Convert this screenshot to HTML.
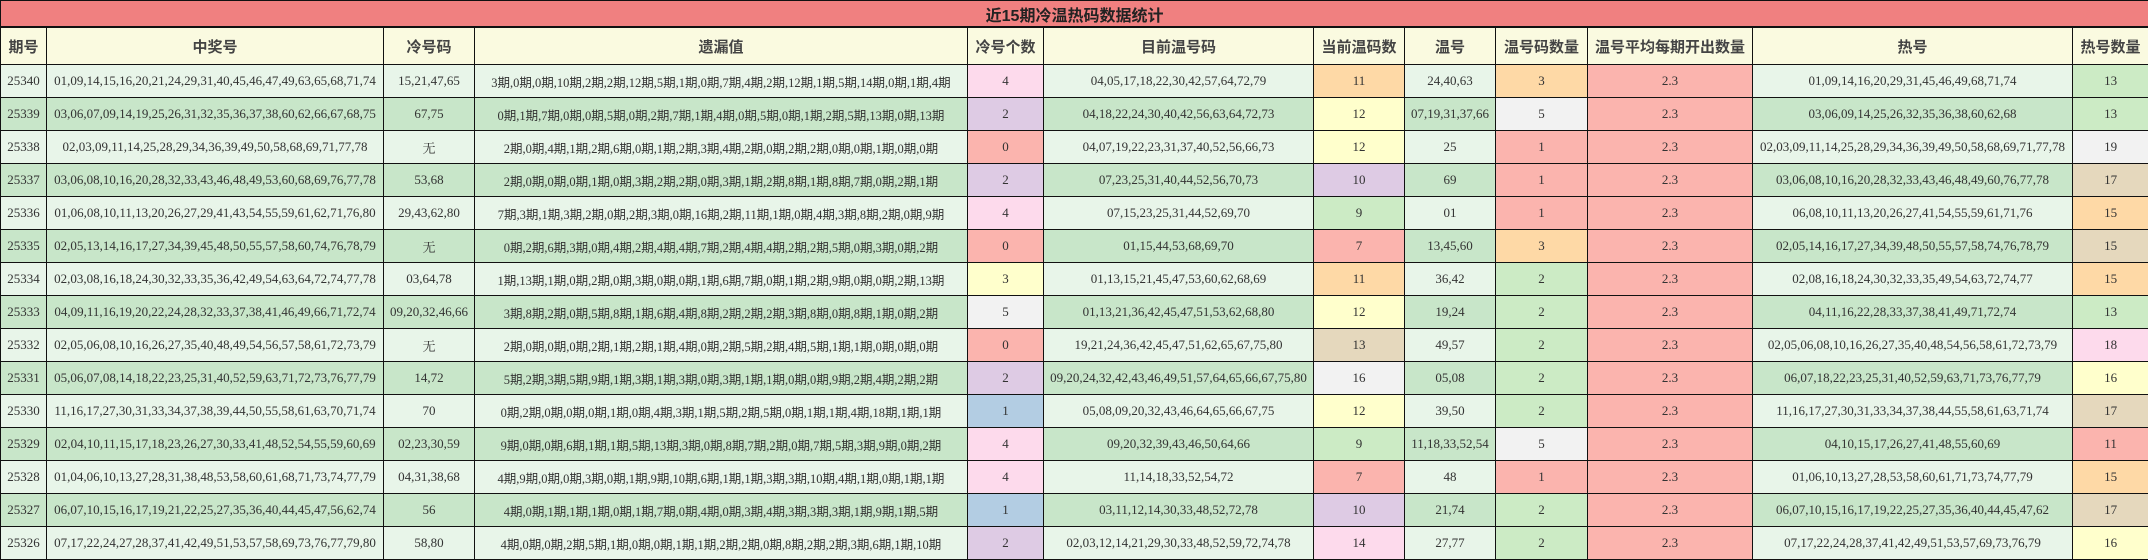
<!DOCTYPE html>
<html><head><meta charset="utf-8">
<style>
html,body{margin:0;padding:0;background:#fff;}
body{width:2148px;height:559px;overflow:hidden;}
table{border-collapse:collapse;table-layout:fixed;width:2148px;font-family:"Liberation Serif","Noto Serif CJK SC","Noto Sans CJK SC",serif;color:#333;}
td,th{border:1px solid #111;text-align:center;padding:0;white-space:nowrap;overflow:hidden;font-size:13px;}
tr.t td{height:25px;background:#f08080;font-family:"Liberation Sans","Noto Sans CJK SC",sans-serif;font-weight:bold;font-size:16px;color:#222;border-bottom:2px solid #111;}
tr.h th{height:36px;background:#fafae0;font-family:"Liberation Sans","Noto Sans CJK SC",sans-serif;font-weight:bold;font-size:15px;color:#444;}
tr.d td{height:32px;}
tr.a td{background:#e8f5e9;}
tr.b td{background:#c8e6c9;}
td.y{font-size:12.5px;font-family:"Liberation Serif","Noto Sans CJK SC",serif;}
tr.d td.R{background:#fbb4ae;}
tr.d td.B{background:#b3cde3;}
tr.d td.G{background:#ccebc5;}
tr.d td.P{background:#decbe4;}
tr.d td.O{background:#fed9a6;}
tr.d td.Y{background:#ffffcc;}
tr.d td.T{background:#e5d8bd;}
tr.d td.K{background:#fddaec;}
tr.d td.S{background:#f2f2f2;}
</style></head><body>
<table>
<colgroup><col style="width:46px"><col style="width:337px"><col style="width:91px"><col style="width:493px"><col style="width:76px"><col style="width:270px"><col style="width:91px"><col style="width:91px"><col style="width:92px"><col style="width:165px"><col style="width:320px"><col style="width:76px"></colgroup>
<tr class="t"><td colspan="12">近15期冷温热码数据统计</td></tr>
<tr class="h"><th>期号</th><th>中奖号</th><th>冷号码</th><th>遗漏值</th><th>冷号个数</th><th>目前温号码</th><th>当前温码数</th><th>温号</th><th>温号码数量</th><th>温号平均每期开出数量</th><th>热号</th><th>热号数量</th></tr>
<tr class="d a"><td>25340</td><td>01,09,14,15,16,20,21,24,29,31,40,45,46,47,49,63,65,68,71,74</td><td>15,21,47,65</td><td class="y">3期,0期,0期,10期,2期,2期,12期,5期,1期,0期,7期,4期,2期,12期,1期,5期,14期,0期,1期,4期</td><td class="K">4</td><td>04,05,17,18,22,30,42,57,64,72,79</td><td class="O">11</td><td>24,40,63</td><td class="O">3</td><td class="R">2.3</td><td>01,09,14,16,20,29,31,45,46,49,68,71,74</td><td class="G">13</td></tr>
<tr class="d b"><td>25339</td><td>03,06,07,09,14,19,25,26,31,32,35,36,37,38,60,62,66,67,68,75</td><td>67,75</td><td class="y">0期,1期,7期,0期,0期,5期,0期,2期,7期,1期,4期,0期,5期,0期,1期,2期,5期,13期,0期,13期</td><td class="P">2</td><td>04,18,22,24,30,40,42,56,63,64,72,73</td><td class="Y">12</td><td>07,19,31,37,66</td><td class="S">5</td><td class="R">2.3</td><td>03,06,09,14,25,26,32,35,36,38,60,62,68</td><td class="G">13</td></tr>
<tr class="d a"><td>25338</td><td>02,03,09,11,14,25,28,29,34,36,39,49,50,58,68,69,71,77,78</td><td>无</td><td class="y">2期,0期,4期,1期,2期,6期,0期,1期,2期,3期,4期,2期,0期,2期,2期,0期,0期,1期,0期,0期</td><td class="R">0</td><td>04,07,19,22,23,31,37,40,52,56,66,73</td><td class="Y">12</td><td>25</td><td class="R">1</td><td class="R">2.3</td><td>02,03,09,11,14,25,28,29,34,36,39,49,50,58,68,69,71,77,78</td><td class="S">19</td></tr>
<tr class="d b"><td>25337</td><td>03,06,08,10,16,20,28,32,33,43,46,48,49,53,60,68,69,76,77,78</td><td>53,68</td><td class="y">2期,0期,0期,0期,1期,0期,3期,2期,2期,0期,3期,1期,2期,8期,1期,8期,7期,0期,2期,1期</td><td class="P">2</td><td>07,23,25,31,40,44,52,56,70,73</td><td class="P">10</td><td>69</td><td class="R">1</td><td class="R">2.3</td><td>03,06,08,10,16,20,28,32,33,43,46,48,49,60,76,77,78</td><td class="T">17</td></tr>
<tr class="d a"><td>25336</td><td>01,06,08,10,11,13,20,26,27,29,41,43,54,55,59,61,62,71,76,80</td><td>29,43,62,80</td><td class="y">7期,3期,1期,3期,2期,0期,2期,3期,0期,16期,2期,11期,1期,0期,4期,3期,8期,2期,0期,9期</td><td class="K">4</td><td>07,15,23,25,31,44,52,69,70</td><td class="G">9</td><td>01</td><td class="R">1</td><td class="R">2.3</td><td>06,08,10,11,13,20,26,27,41,54,55,59,61,71,76</td><td class="O">15</td></tr>
<tr class="d b"><td>25335</td><td>02,05,13,14,16,17,27,34,39,45,48,50,55,57,58,60,74,76,78,79</td><td>无</td><td class="y">0期,2期,6期,3期,0期,4期,2期,4期,4期,7期,2期,4期,4期,2期,2期,5期,0期,3期,0期,2期</td><td class="R">0</td><td>01,15,44,53,68,69,70</td><td class="R">7</td><td>13,45,60</td><td class="O">3</td><td class="R">2.3</td><td>02,05,14,16,17,27,34,39,48,50,55,57,58,74,76,78,79</td><td class="T">15</td></tr>
<tr class="d a"><td>25334</td><td>02,03,08,16,18,24,30,32,33,35,36,42,49,54,63,64,72,74,77,78</td><td>03,64,78</td><td class="y">1期,13期,1期,0期,2期,0期,3期,0期,0期,1期,6期,7期,0期,1期,2期,9期,0期,0期,2期,13期</td><td class="Y">3</td><td>01,13,15,21,45,47,53,60,62,68,69</td><td class="O">11</td><td>36,42</td><td class="G">2</td><td class="R">2.3</td><td>02,08,16,18,24,30,32,33,35,49,54,63,72,74,77</td><td class="O">15</td></tr>
<tr class="d b"><td>25333</td><td>04,09,11,16,19,20,22,24,28,32,33,37,38,41,46,49,66,71,72,74</td><td>09,20,32,46,66</td><td class="y">3期,8期,2期,0期,5期,8期,1期,6期,4期,8期,2期,2期,2期,3期,8期,0期,8期,1期,0期,2期</td><td class="S">5</td><td>01,13,21,36,42,45,47,51,53,62,68,80</td><td class="Y">12</td><td>19,24</td><td class="G">2</td><td class="R">2.3</td><td>04,11,16,22,28,33,37,38,41,49,71,72,74</td><td class="G">13</td></tr>
<tr class="d a"><td>25332</td><td>02,05,06,08,10,16,26,27,35,40,48,49,54,56,57,58,61,72,73,79</td><td>无</td><td class="y">2期,0期,0期,0期,2期,1期,2期,1期,4期,0期,2期,5期,2期,4期,5期,1期,1期,0期,0期,0期</td><td class="R">0</td><td>19,21,24,36,42,45,47,51,62,65,67,75,80</td><td class="T">13</td><td>49,57</td><td class="G">2</td><td class="R">2.3</td><td>02,05,06,08,10,16,26,27,35,40,48,54,56,58,61,72,73,79</td><td class="K">18</td></tr>
<tr class="d b"><td>25331</td><td>05,06,07,08,14,18,22,23,25,31,40,52,59,63,71,72,73,76,77,79</td><td>14,72</td><td class="y">5期,2期,3期,5期,9期,1期,3期,1期,3期,0期,3期,1期,1期,0期,0期,9期,2期,4期,2期,2期</td><td class="P">2</td><td>09,20,24,32,42,43,46,49,51,57,64,65,66,67,75,80</td><td class="S">16</td><td>05,08</td><td class="G">2</td><td class="R">2.3</td><td>06,07,18,22,23,25,31,40,52,59,63,71,73,76,77,79</td><td class="Y">16</td></tr>
<tr class="d a"><td>25330</td><td>11,16,17,27,30,31,33,34,37,38,39,44,50,55,58,61,63,70,71,74</td><td>70</td><td class="y">0期,2期,0期,0期,0期,1期,0期,4期,3期,1期,5期,2期,5期,0期,1期,1期,4期,18期,1期,1期</td><td class="B">1</td><td>05,08,09,20,32,43,46,64,65,66,67,75</td><td class="Y">12</td><td>39,50</td><td class="G">2</td><td class="R">2.3</td><td>11,16,17,27,30,31,33,34,37,38,44,55,58,61,63,71,74</td><td class="T">17</td></tr>
<tr class="d b"><td>25329</td><td>02,04,10,11,15,17,18,23,26,27,30,33,41,48,52,54,55,59,60,69</td><td>02,23,30,59</td><td class="y">9期,0期,0期,6期,1期,1期,5期,13期,3期,0期,8期,7期,2期,0期,7期,5期,3期,9期,0期,2期</td><td class="K">4</td><td>09,20,32,39,43,46,50,64,66</td><td class="G">9</td><td>11,18,33,52,54</td><td class="S">5</td><td class="R">2.3</td><td>04,10,15,17,26,27,41,48,55,60,69</td><td class="R">11</td></tr>
<tr class="d a"><td>25328</td><td>01,04,06,10,13,27,28,31,38,48,53,58,60,61,68,71,73,74,77,79</td><td>04,31,38,68</td><td class="y">4期,9期,0期,0期,3期,0期,1期,9期,10期,6期,1期,1期,3期,3期,10期,4期,1期,0期,1期,1期</td><td class="K">4</td><td>11,14,18,33,52,54,72</td><td class="R">7</td><td>48</td><td class="R">1</td><td class="R">2.3</td><td>01,06,10,13,27,28,53,58,60,61,71,73,74,77,79</td><td class="O">15</td></tr>
<tr class="d b"><td>25327</td><td>06,07,10,15,16,17,19,21,22,25,27,35,36,40,44,45,47,56,62,74</td><td>56</td><td class="y">4期,0期,1期,1期,1期,0期,1期,7期,0期,4期,0期,3期,4期,3期,3期,3期,1期,9期,1期,5期</td><td class="B">1</td><td>03,11,12,14,30,33,48,52,72,78</td><td class="P">10</td><td>21,74</td><td class="G">2</td><td class="R">2.3</td><td>06,07,10,15,16,17,19,22,25,27,35,36,40,44,45,47,62</td><td class="T">17</td></tr>
<tr class="d a"><td>25326</td><td>07,17,22,24,27,28,37,41,42,49,51,53,57,58,69,73,76,77,79,80</td><td>58,80</td><td class="y">4期,0期,0期,2期,5期,1期,0期,0期,1期,1期,2期,2期,0期,8期,2期,2期,3期,6期,1期,10期</td><td class="P">2</td><td>02,03,12,14,21,29,30,33,48,52,59,72,74,78</td><td class="K">14</td><td>27,77</td><td class="G">2</td><td class="R">2.3</td><td>07,17,22,24,28,37,41,42,49,51,53,57,69,73,76,79</td><td class="Y">16</td></tr>
</table>
</body></html>
